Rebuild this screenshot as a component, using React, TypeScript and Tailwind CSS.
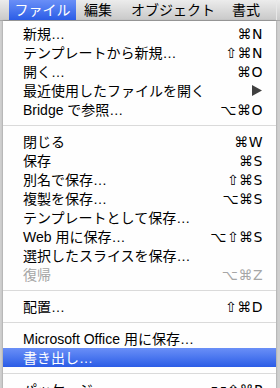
import React from 'react';

type Item =
  | { kind: 'sep' }
  | { kind: 'item'; label: string; keys?: string; sub?: boolean; disabled?: boolean; active?: boolean };

const ITEMS: Item[] = [
  { kind: 'item', label: '新規…', keys: '⌘N' },
  { kind: 'item', label: 'テンプレートから新規…', keys: '⇧⌘N' },
  { kind: 'item', label: '開く…', keys: '⌘O' },
  { kind: 'item', label: '最近使用したファイルを開く', sub: true },
  { kind: 'item', label: 'Bridge で参照…', keys: '⌥⌘O' },
  { kind: 'sep' },
  { kind: 'item', label: '閉じる', keys: '⌘W' },
  { kind: 'item', label: '保存', keys: '⌘S' },
  { kind: 'item', label: '別名で保存…', keys: '⇧⌘S' },
  { kind: 'item', label: '複製を保存…', keys: '⌥⌘S' },
  { kind: 'item', label: 'テンプレートとして保存…' },
  { kind: 'item', label: 'Web 用に保存…', keys: '⌥⇧⌘S' },
  { kind: 'item', label: '選択したスライスを保存…' },
  { kind: 'item', label: '復帰', keys: '⌥⌘Z', disabled: true },
  { kind: 'sep' },
  { kind: 'item', label: '配置…', keys: '⇧⌘D' },
  { kind: 'sep' },
  { kind: 'item', label: 'Microsoft Office 用に保存…' },
  { kind: 'item', label: '書き出し…', active: true },
  { kind: 'sep' },
  { kind: 'item', label: 'パッケージ', keys: '⌥⇧⌘P' },
];

const UI_FONT = "font-['Liberation_Sans','Noto_Sans_CJK_JP',sans-serif]";

export default function App() {
  return (
    <div className={`w-[280px] h-[388px] overflow-hidden bg-[#cfcfcf] text-[14px] text-black ${UI_FONT}`}>
      {/* Menu bar */}
      <div className="flex h-[21px] items-center bg-gradient-to-b from-[#ececec] to-[#c9c9c9] border-b border-[#a8a8a8] leading-none">
        <div className="ml-[9px] flex h-full w-[67px] items-center justify-center bg-gradient-to-b from-[#6a8ff7] to-[#2b5ce6] text-white">
          ファイル
        </div>
        <div className="ml-[8px]">編集</div>
        <div className="ml-[19px]">オブジェクト</div>
        <div className="ml-[17px]">書式</div>
        <div className="ml-auto mr-[3px] h-full w-px bg-[#e8e8e8]" />
      </div>

      {/* Dropdown */}
      <div className="ml-[3px] w-[273px] bg-white/[0.97] pt-[3px] shadow-[0_0_2px_rgba(0,0,0,0.35)]">
        {ITEMS.map((it, i) =>
          it.kind === 'sep' ? (
            <div key={i} className="flex h-[13px] items-center">
              <div className="h-px w-full bg-[#dadada]" />
            </div>
          ) : (
            <div
              key={i}
              className={`flex h-[19px] items-center pl-[20px] pr-[13px] leading-none ${
                it.active
                  ? 'bg-gradient-to-b from-[#6a8ff7] to-[#2b5ce6] text-white'
                  : it.disabled
                  ? 'text-[#a6a6a6]'
                  : ''
              }`}
            >
              <span className="flex-1 whitespace-nowrap">{it.label}</span>
              {it.keys && (
                <span className="font-['DejaVu_Sans','Liberation_Sans',sans-serif] text-[14px] tracking-[0.5px]">
                  {it.keys}
                </span>
              )}
              {it.sub && (
                <svg width="10" height="11" viewBox="0 0 10 11" className="mr-[1px]">
                  <path d="M0 0 L10 5.5 L0 11 Z" fill="#404040" />
                </svg>
              )}
            </div>
          )
        )}
      </div>
    </div>
  );
}
